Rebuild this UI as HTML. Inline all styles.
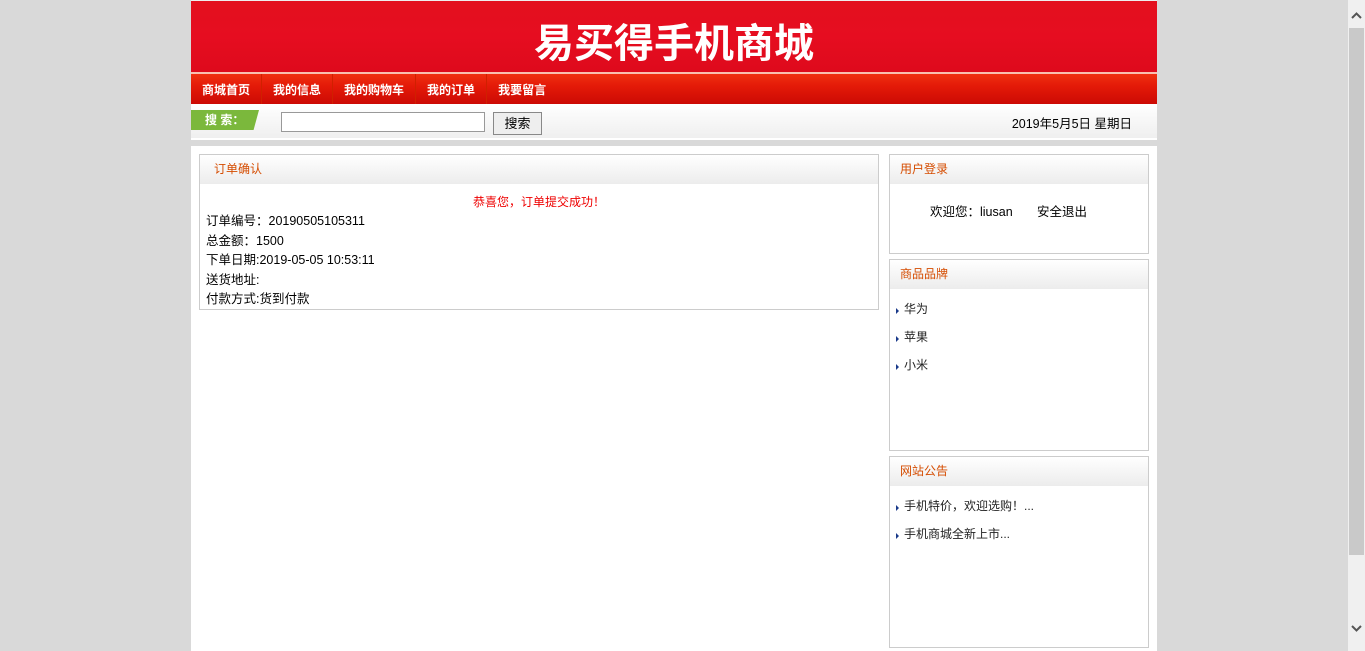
<!DOCTYPE html>
<html><head><meta charset="utf-8"><style>
*{margin:0;padding:0;box-sizing:border-box}
html,body{width:1365px;height:651px;overflow:hidden;background:#d9d9d9;font-family:"Liberation Sans","Noto Sans CJK SC",sans-serif;font-size:12px;color:#000}
.wrap{position:absolute;left:191px;top:0;width:966px;height:651px;background:#fff}
.banner{position:absolute;left:0;top:0;width:966px;height:72px;background:linear-gradient(#e3101e,#e60d20 50%,#de0a1c);border-top:1px solid #eee}
.banner .t{position:absolute;left:343px;top:13px;font-size:40px;font-weight:bold;color:#fff;letter-spacing:0px;font-family:"Noto Sans CJK SC",sans-serif;line-height:52px}
.nav{position:absolute;left:0;top:72px;width:966px;height:32px;background:linear-gradient(#f03010,#e41a08 40%,#cc0a04);border-top:2px solid #f9c0b0}
.nav span{float:left;height:30px;line-height:32px;color:#fff;font-weight:bold;font-size:12px;padding:0 11px 0 11px;border-right:1px solid #d02000}
.search{position:absolute;left:0;top:104px;width:966px;height:36px;background:linear-gradient(#fff,#efefef);border-bottom:2px solid #fff}
.tag{position:absolute;left:0;top:6px;width:68px;height:20px;background:#7bb83c;color:#fff;font-weight:bold;line-height:20px;padding-left:14px;clip-path:polygon(0 0,100% 0,92% 100%,0 100%)}
.inp{position:absolute;left:90px;top:8px;width:204px;height:20px;border:1px solid #999;background:#fff}
.btn{position:absolute;left:302px;top:8px;width:49px;height:23px;border:1px solid #888;background:#eee;font-size:13px;text-align:center;line-height:21px}
.date{position:absolute;right:25px;top:9px;font-size:12.5px}
.strip{position:absolute;left:0;top:140px;width:966px;height:6px;background:#d9d9d9}
.box{position:absolute;border:1px solid #ccc;background:#fff}
.box .h{height:29px;background:linear-gradient(#fff,#ececec);color:#d54c00;line-height:29px;padding-left:10px;font-size:12px}
.li{height:28px;line-height:28px;padding-left:14px;position:relative;font-size:12px;color:#222}
.li:before{content:"";position:absolute;left:6px;top:13px;width:0;height:0;border-left:3px solid #1a3a8a;border-top:3px solid transparent;border-bottom:3px solid transparent}
.sb{position:absolute;left:1348px;top:0;width:17px;height:651px;background:#f0f0f0}
.thumb{position:absolute;left:1px;top:28px;width:15px;height:527px;background:#c9c9c9}
</style></head><body>
<div class="wrap">
<div class="banner"><div class="t">易买得手机商城</div></div>
<div class="nav"><span>商城首页</span><span>我的信息</span><span>我的购物车</span><span>我的订单</span><span style="border:none">我要留言</span></div>
<div class="search"><div class="tag">搜 索：</div><div class="inp"></div><div class="btn">搜索</div><div class="date">2019年5月5日 星期日</div></div>
<div class="strip"></div>
<div class="box" style="left:8px;top:154px;width:680px;height:156px">
<div class="h" style="padding-left:14px">订单确认</div>
<div style="text-align:center;color:#e00;margin-top:9px;line-height:19px">恭喜您，订单提交成功！</div>
<div style="padding-left:6px;line-height:19.5px;font-size:12.5px">订单编号：20190505105311<br>总金额：1500<br>下单日期:2019-05-05 10:53:11<br>送货地址:<br>付款方式:货到付款</div>
</div>
<div class="box" style="left:698px;top:154px;width:260px;height:100px"><div class="h">用户登录</div>
<div style="padding:17px 0 0 40px;font-size:12.5px">欢迎您：liusan&nbsp;&nbsp;&nbsp;&nbsp;&nbsp;&nbsp;&nbsp;安全退出</div></div>
<div class="box" style="left:698px;top:259px;width:260px;height:192px"><div class="h">商品品牌</div>
<div style="padding-top:6px"><div class="li">华为</div><div class="li">苹果</div><div class="li">小米</div></div></div>
<div class="box" style="left:698px;top:456px;width:260px;height:192px"><div class="h">网站公告</div>
<div style="padding-top:6px"><div class="li">手机特价，欢迎选购！...</div><div class="li">手机商城全新上市...</div></div></div>
</div>
<div class="sb"><div class="thumb"></div>
<svg style="position:absolute;left:3px;top:12px" width="11" height="7"><path d="M1 6L5.5 1.5 10 6" stroke="#555" stroke-width="2" fill="none"/></svg>
<svg style="position:absolute;left:3px;top:625px" width="11" height="7"><path d="M1 1L5.5 5.5 10 1" stroke="#555" stroke-width="2" fill="none"/></svg>
</div>
</body></html>
